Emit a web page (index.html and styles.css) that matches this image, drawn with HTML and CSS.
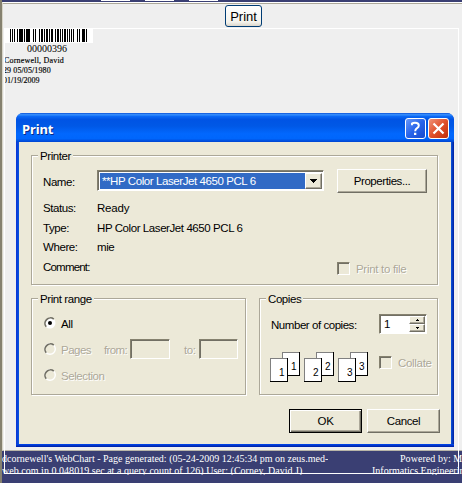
FILE: index.html
```html
<!DOCTYPE html>
<html lang="en">
<head>
<meta charset="utf-8">
<title>Print</title>
<link rel="stylesheet" href="styles.css">
</head>
<body>
<div class="page">
  <header class="tabs"><i></i><i></i><i></i></header>
  <main class="sheet">
    <div class="toolbar"><button class="web-print">Print</button></div>
    <section class="label">
      <svg class="barcode" width="88" height="15" viewBox="0 0 88 15" shape-rendering="crispEdges">
        <path fill="#fff" d="M0 0h88v15H0z"/>
        <path d="M5 1h1v13H5zM7 1h1v13H7zM9 1h1v13H9zM12 1h1v13h-1zM14 1h4v13h-4zM19 1h1v13h-1zM21 1h4v13h-4zM28 1h1v13h-1zM30 1h1v13h-1zM34 1h1v13h-1zM36 1h2v13h-2zM39 1h1v13h-1zM41 1h2v13h-2zM44 1h1v13h-1zM46 1h2v13h-2zM50 1h1v13h-1zM52 1h2v13h-2zM55 1h1v13h-1zM57 1h1v13h-1zM59 1h2v13h-2zM62 1h1v13h-1zM64 1h1v13h-1zM66 1h1v13h-1zM68 1h1v13h-1zM72 1h1v13h-1zM74 1h1v13h-1zM77 1h3v13h-3zM81 1h1v13h-1z"/>
      </svg>
      <div class="chart-number">00000396</div>
      <div class="patient"><p class="p1">Cornewell, David</p><p class="p2">29 05/05/1980</p><p class="p3">01/19/2009</p></div>
    </section>
  </main>
  <footer class="status">
    <div class="generated"><p>dcornewell's WebChart - Page generated: (05-24-2009 12:45:34 pm on zeus.med-</p><p class="g2">web.com in 0.048019 sec at a query count of 126) User: (Corney, David J)</p></div>
    <div class="powered"><p>Powered by: M</p><p class="info">Informatics Engineerin</p></div>
  </footer>
  <div class="frame"></div>
</div>

<div class="dialog">
  <div class="titlebar">
    <h1>Print</h1>
    <svg class="caption-btn" width="21" height="21" viewBox="0 0 21 21">
      <defs><linearGradient id="help" x2="1" y2="1"><stop stop-color="#6c9bfa"/><stop offset=".5" stop-color="#2864ea"/><stop offset="1" stop-color="#1748cc"/></linearGradient></defs>
      <rect x=".5" y=".5" width="20" height="20" rx="2.5" fill="url(#help)" stroke="#fff"/>
      <path d="M7 7.2V5.6Q8 4.8 10 4.8Q13.8 4.8 13.8 7.5Q13.8 9 12 10.2Q10.2 11.3 10.2 13.2" fill="none" stroke="#fff" stroke-width="2"/><path fill="#fff" d="M9 14.7h2.3V17H9z"/>
    </svg>
    <svg class="caption-btn" width="21" height="21" viewBox="0 0 21 21">
      <defs><linearGradient id="close" x2="1" y2="1"><stop stop-color="#f0957b"/><stop offset=".5" stop-color="#e0512d"/><stop offset="1" stop-color="#bd2c08"/></linearGradient></defs>
      <rect x=".5" y=".5" width="20" height="20" rx="2.5" fill="url(#close)" stroke="#fff"/>
      <path d="M5.5 5.5l10 10M15.5 5.5l-10 10" stroke="#fff" stroke-width="2.2"/>
    </svg>
  </div>
  <div class="body">
    <section class="group printer">
      <h2>Printer</h2>
      <div class="name-row">
        <span class="key">Name:</span>
        <div class="combo"><div class="selected">**HP Color LaserJet 4650 PCL 6</div><div class="drop"><svg width="7" height="4" shape-rendering="crispEdges"><path d="M0 0h7v1H6v1H5v1H4v1H3V3H2V2H1V1H0z"/></svg></div></div>
        <button class="btn properties">Properties...</button>
      </div>
      <dl>
        <dt>Status:</dt><dd class="ready">Ready</dd>
        <dt>Type:</dt><dd>HP Color LaserJet 4650 PCL 6</dd>
        <dt>Where:</dt><dd>mie</dd>
        <dt class="comment">Comment:</dt><dd></dd>
      </dl>
      <div class="check to-file off"><i></i><span>Print to file</span></div>
    </section>
    <div class="groups">
      <section class="group range">
        <h2>Print range</h2>
        <div class="choice"><svg width="12" height="12" viewBox="0 0 12 12"><circle cx="6" cy="6" r="5.5" fill="#fff"/><path d="M2.2 9.8A5.4 5.4 0 0 1 9.8 2.2" fill="none" stroke="#716f64" stroke-width="1.7"/><circle cx="6" cy="6" r="2"/></svg><span class="all">All</span></div>
        <div class="choice off"><svg width="12" height="12" viewBox="0 0 12 12"><circle cx="6" cy="6" r="5.3" fill="#ece9d8" stroke="#fff" stroke-width="1.4"/><path d="M2.2 9.8A5.4 5.4 0 0 1 9.8 2.2" fill="none" stroke="#716f64" stroke-width="1.7"/></svg><span class="pages">Pages</span><span class="from">from:</span><i class="field"></i><span class="to">to:</span><i class="field small"></i></div>
        <div class="choice off"><svg width="12" height="12" viewBox="0 0 12 12"><circle cx="6" cy="6" r="5.3" fill="#ece9d8" stroke="#fff" stroke-width="1.4"/><path d="M2.2 9.8A5.4 5.4 0 0 1 9.8 2.2" fill="none" stroke="#716f64" stroke-width="1.7"/></svg><span class="selection">Selection</span></div>
      </section>
      <section class="group copies">
        <h2>Copies</h2>
        <div class="count"><span class="w-count">Number of copies:</span><div class="spinner"><b>1</b><div class="arrows"><i><svg width="3" height="2" shape-rendering="crispEdges"><path d="M1 0h1v1h1v1H0V1h1z"/></svg></i><i><svg width="3" height="2" shape-rendering="crispEdges"><path d="M0 0h3v1H2v1H1V1H0z"/></svg></i></div></div></div>
        <div class="collation">
          <svg width="100" height="31" viewBox="0 0 100 31">
            <defs><g id="sheet" shape-rendering="crispEdges"><path fill="#000" d="M0 0h18v24H0z"/><path fill="#808080" d="M0 0h17v23H0z"/><path fill="#fff" d="M1 1h16v22H1z"/></g></defs>
            <use href="#sheet" x="12"/><text x="21" y="18">1</text><use href="#sheet" y="6"/><text x="9" y="24">1</text>
            <use href="#sheet" x="46"/><text x="55" y="18">2</text><use href="#sheet" x="34" y="6"/><text x="43" y="24">2</text>
            <use href="#sheet" x="80"/><text x="89" y="18">3</text><use href="#sheet" x="68" y="6"/><text x="77" y="24">3</text>
          </svg>
          <div class="check collate off"><i></i><span>Collate</span></div>
        </div>
      </section>
    </div>
    <div class="actions"><button class="btn ok">OK</button><button class="btn cancel">Cancel</button></div>
  </div>
</div>
</body>
</html>
```
FILE: styles.css
```css
* { box-sizing: border-box; }
body { margin: 0; width: 462px; height: 483px; overflow: hidden; background: #efefef; font: 11.5px/14px "Liberation Sans", Arial, sans-serif; letter-spacing: -.42px; color: #000; }
p, h1, h2, dl, dd { margin: 0; }
i, b { font-style: normal; font-weight: normal; }
button { font: inherit; letter-spacing: inherit; color: #000; padding: 0; border-radius: 0; white-space: nowrap; }

.page { position: relative; height: 483px; border-left: 2px solid #85816f; overflow: hidden; display: flex; flex-direction: column; }
.tabs { height: 2px; background: #3a3f73; display: flex; gap: 15px; padding-left: 99px; flex: none; }
.tabs i { width: 29px; height: 1px; background: #fff; }
.sheet { height: 449px; flex: none; border-top: 1px solid #fff; border-left: 1px solid #d8d5c8; border-bottom: 1px solid #b8b5a8; }
.toolbar { height: 25px; border-top: 1px solid #aca899; display: flex; justify-content: center; padding-top: 1px; }
.web-print { width: 37px; height: 22px; flex: none; margin-left: 22px; border: 1px solid #003c74; border-radius: 3px; background: linear-gradient(#fff, #f3f2ec 80%, #dcd6cb); font: 13px/19px "Liberation Sans", Arial, sans-serif; letter-spacing: 0; }
.label { padding-left: 2px; font-family: "Liberation Serif", "Times New Roman", serif; letter-spacing: 0; }
.barcode { display: block; }
.chart-number { margin-left: 22px; font-size: 10px; line-height: 11px; }
.patient { margin-left: -1px; padding-top: 2px; font-size: 8px; line-height: 10px; -webkit-text-stroke: .15px #000; overflow: hidden; white-space: nowrap; }
.p1 { letter-spacing: .2px; }
.p2, .p3 { text-indent: -1px; }
.p2 { letter-spacing: .1px; }
.status { flex: 1; padding: 2px 0 0; background: #3a3f73; color: #fff; display: flex; justify-content: space-between; font: 10px/12px "Liberation Serif", "Times New Roman", serif; letter-spacing: 0; overflow: hidden; white-space: nowrap; }
.generated { height: 22px; overflow: hidden; }
.g2 { letter-spacing: .03px; }
.powered { height: 22px; overflow: hidden; flex: none; width: 92px; padding-left: 2px; }
.powered p { padding-left: 28px; letter-spacing: .05px; }
.powered .info { padding-left: 0; letter-spacing: 0; }
.frame { position: absolute; left: 2px; top: 28px; width: 455px; height: 446px; border: 1px solid #fff; pointer-events: none; }

.dialog { position: absolute; left: 16px; top: 113px; width: 438px; height: 334px; background: linear-gradient(90deg, #0831d9, #0855dd 3px, #0855dd 435px, #001ea0); border-radius: 7px 7px 0 0; overflow: hidden; }
.titlebar { height: 29px; padding: 5px 5px 0 6px; display: flex; gap: 2px; background: linear-gradient(#0a52d8, #3a93ff 6%, #0c6af6 11%, #0054e4 22%, #0058e6 45%, #0268fe 72%, #0066fc 88%, #0044d0); }
h1 { flex: 1; font: bold 13px/22px "Noto Sans", "Open Sans", sans-serif; letter-spacing: -.1px; color: #fff; text-shadow: 1px 1px #0b2c86; }
.body { margin: 0 3px; height: 302px; padding: 13px 13px 0 12px; background: #ece9d8; }
.dialog::after { content: ""; display: block; height: 3px; background: linear-gradient(#0048f0, #001ea0); }
.group { border: 1px solid #aca899; box-shadow: 1px 1px #fff, inset 1px 1px #fff; }
h2 { width: max-content; margin: -7px 0 0 6px; padding: 0 2px; background: #ece9d8; font: inherit; height: 14px; }
.printer { width: 407px; height: 130px; display: grid; grid-template-rows: 7px 30px 1fr; grid-template-columns: 300px 1fr; }
.printer h2, .name-row { grid-column: 1 / 3; }
.name-row { display: flex; padding: 7px 0 0 11px; align-items: flex-start; }
.key { width: 54px; padding-top: 5px; }
.combo, .field, .spinner, .check i { border: 1px solid; border-color: #85816f #fff #fff #85816f; box-shadow: inset 1px 1px #716f64; }
.combo { width: 227px; height: 21px; padding: 2px 1px 1px 2px; display: flex; background: #fff; }
.selected { flex: 1; padding-left: 2px; background: #316ac5; color: #fff; line-height: 17px; white-space: nowrap; }
.drop { width: 17px; display: grid; place-items: center; }
.drop, .btn, .arrows i { background: #ece9d8; border: 1px solid; border-color: #fff #716f64 #716f64 #fff; box-shadow: inset -1px -1px #aca899; }
.properties { width: 90px; height: 24px; margin: -1px 0 0 13px; }
dl { display: grid; grid-template-columns: 54px 1fr; grid-template-rows: repeat(3, 19.5px) 20px; padding: 8px 0 0 11px; white-space: nowrap; }
.ready { letter-spacing: -.2px; }
.comment { letter-spacing: -.8px; }
.check { display: flex; gap: 6px; white-space: nowrap; }
.check i { width: 13px; height: 13px; flex: none; }
.check span { letter-spacing: -.3px; }
.to-file { padding: 69px 0 0 5px; }
.off { color: #aca899; text-shadow: 1px 1px #fff; }
.groups { display: flex; gap: 13px; margin-top: 13px; }
.range { width: 215px; height: 97px; }
.choice { display: flex; align-items: center; height: 26px; padding-left: 12px; }
.range h2 + .choice { margin-top: 4px; }
.choice svg { margin-right: 5px; flex: none; }
.choice span { padding-top: 2px; flex: none; }
.pages { width: 43px; letter-spacing: -.5px; }
.from { width: 26px; letter-spacing: -.6px; }
.field { width: 40px; height: 20px; flex: none; }
.to { width: 29px; padding-left: 14px; }
.field.small { width: 39px; }
.copies { width: 179px; height: 97px; }
.count { display: flex; padding: 8px 0 0 11px; }
.w-count { width: 108px; padding-top: 4px; white-space: nowrap; letter-spacing: -.45px; }
.spinner { width: 48px; height: 20px; padding: 1px; display: flex; background: #fff; }
.spinner b { flex: 1; padding: 1px 0 0 3px; }
.arrows { width: 16px; }
.arrows i { display: grid; place-items: center; height: 8px; }
.collation { display: flex; padding: 18px 0 0 10px; }
.collation svg { flex: none; }
.collation text { font: 10px "Liberation Sans", Arial, sans-serif; }
.collate { padding: 4px 0 0 9px; }
.actions { display: flex; justify-content: flex-end; gap: 5px; padding-top: 14px; margin-right: -2px; }
.actions .btn { width: 73px; height: 24px; }
.actions .ok { border-color: #000; box-shadow: inset 1px 1px #fff, inset -1px -1px #716f64, inset -2px -2px #aca899; }
```
